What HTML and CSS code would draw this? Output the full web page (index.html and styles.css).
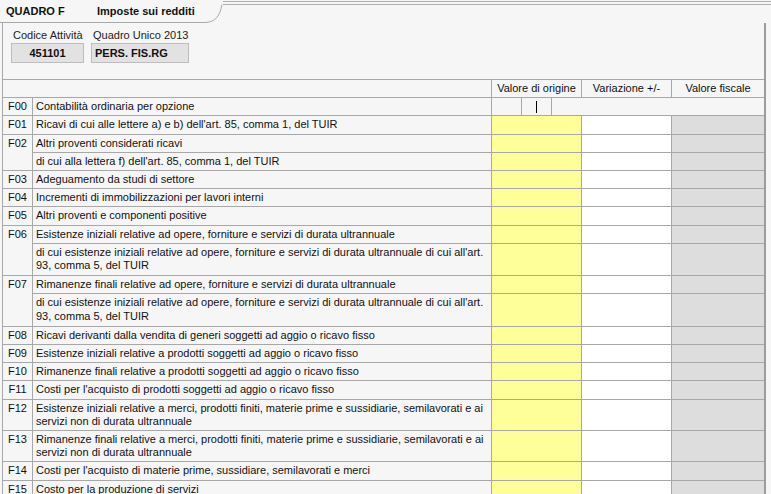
FILE: index.html
```html
<!DOCTYPE html>
<html lang="it">
<head>
    <meta charset="UTF-8">
    <title>Quadro F - Imposte sui redditi</title>
    <link rel="stylesheet" href="styles.css">
</head>
<body>
    <div class="tabbar">
        <div class="tab">
            <span class="tab-code">QUADRO F</span>
            <span>Imposte sui redditi</span>
        </div>
        <svg class="tab-curve" width="18" height="23" viewBox="0 0 18 23">
            <path d="M0 22.5 C10 22.5 15 16 17 4.5" fill="none" stroke="#a8a8a8" stroke-width="1"/>
        </svg>
        <div class="tab-rest"></div>
    </div>

    <div class="panel">
        <div class="info">
            <div class="field field-code">
                <div class="field-label">Codice Attività</div>
                <div class="field-box center">451101</div>
            </div>
            <div class="field field-model">
                <div class="field-label">Quadro Unico 2013</div>
                <div class="field-box">PERS. FIS.RG</div>
            </div>
        </div>

        <div class="grid">
            <div class="hblank"></div>
            <div class="h v1">Valore di origine</div>
            <div class="h v2">Variazione +/-</div>
            <div class="h v3">Valore fiscale</div>

            <div class="c">F00</div>
            <div class="d">Contabilità ordinaria per opzione</div>
            <div class="opt"><div class="opt-box"><span class="caret"></span></div></div>

            <div class="c">F01</div>
            <div class="d">Ricavi di cui alle lettere a) e b) dell'art. 85, comma 1, del TUIR</div>
            <div class="v1"></div><div class="v2"></div><div class="v3"></div>

            <div class="c span2">F02</div>
            <div class="d">Altri proventi considerati ricavi</div>
            <div class="v1"></div><div class="v2"></div><div class="v3"></div>
            <div class="d">di cui alla lettera f) dell'art. 85, comma 1, del TUIR</div>
            <div class="v1"></div><div class="v2"></div><div class="v3"></div>

            <div class="c">F03</div>
            <div class="d">Adeguamento da studi di settore</div>
            <div class="v1"></div><div class="v2"></div><div class="v3"></div>

            <div class="c">F04</div>
            <div class="d">Incrementi di immobilizzazioni per lavori interni</div>
            <div class="v1"></div><div class="v2"></div><div class="v3"></div>

            <div class="c">F05</div>
            <div class="d">Altri proventi e componenti positive</div>
            <div class="v1"></div><div class="v2"></div><div class="v3"></div>

            <div class="c span2">F06</div>
            <div class="d">Esistenze iniziali relative ad opere, forniture e servizi di durata ultrannuale</div>
            <div class="v1"></div><div class="v2"></div><div class="v3"></div>
            <div class="d multi">di cui esistenze iniziali relative ad opere, forniture e servizi di durata ultrannuale di cui all'art.<br>93, comma 5, del TUIR</div>
            <div class="v1"></div><div class="v2"></div><div class="v3"></div>

            <div class="c span2">F07</div>
            <div class="d">Rimanenze finali relative ad opere, forniture e servizi di durata ultrannuale</div>
            <div class="v1"></div><div class="v2"></div><div class="v3"></div>
            <div class="d multi">di cui esistenze iniziali relative ad opere, forniture e servizi di durata ultrannuale di cui all'art.<br>93, comma 5, del TUIR</div>
            <div class="v1"></div><div class="v2"></div><div class="v3"></div>

            <div class="c">F08</div>
            <div class="d">Ricavi derivanti dalla vendita di generi soggetti ad aggio o ricavo fisso</div>
            <div class="v1"></div><div class="v2"></div><div class="v3"></div>

            <div class="c">F09</div>
            <div class="d">Esistenze iniziali relative a prodotti soggetti ad aggio o ricavo fisso</div>
            <div class="v1"></div><div class="v2"></div><div class="v3"></div>

            <div class="c">F10</div>
            <div class="d">Rimanenze finali relative a prodotti soggetti ad aggio o ricavo fisso</div>
            <div class="v1"></div><div class="v2"></div><div class="v3"></div>

            <div class="c">F11</div>
            <div class="d">Costi per l'acquisto di prodotti soggetti ad aggio o ricavo fisso</div>
            <div class="v1"></div><div class="v2"></div><div class="v3"></div>

            <div class="c">F12</div>
            <div class="d">Esistenze iniziali relative a merci, prodotti finiti, materie prime e sussidiarie, semilavorati e ai<br>servizi non di durata ultrannuale</div>
            <div class="v1"></div><div class="v2"></div><div class="v3"></div>

            <div class="c">F13</div>
            <div class="d">Rimanenze finali relative a merci, prodotti finiti, materie prime e sussidiarie, semilavorati e ai<br>servizi non di durata ultrannuale</div>
            <div class="v1"></div><div class="v2"></div><div class="v3"></div>

            <div class="c">F14</div>
            <div class="d">Costi per l'acquisto di materie prime, sussidiare, semilavorati e merci</div>
            <div class="v1"></div><div class="v2"></div><div class="v3"></div>

            <div class="c">F15</div>
            <div class="d">Costo per la produzione di servizi</div>
            <div class="v1"></div><div class="v2"></div><div class="v3"></div>
        </div>
    </div>
</body>
</html>
```

FILE: styles.css
```css
body {
    font-family: "Liberation Sans", Arial, sans-serif;
    font-size: 11px;
    margin: 0;
    background: #f6f6f6;
    color: #111;
    overflow: hidden;
    white-space: nowrap;
}

.tabbar {
    display: flex;
    height: 23px;
}

.tab {
    width: 205px;
    height: 23px;
    box-sizing: border-box;
    border-bottom: 1px solid #a8a8a8;
    padding-left: 6px;
    display: flex;
    align-items: center;
    font-weight: bold;
}

.tab-code {
    width: 91px;
}

.tab-curve {
    display: block;
    flex: none;
}

.tab-rest {
    flex: 1;
    margin-top: 1px;
    height: 4px;
    border-top: 4px double #b0b0b0;
}

.panel {
    margin-left: 2px;
    width: 764px;
    box-sizing: border-box;
    border-left: 1px solid #a8a8a8;
    border-right: 2px solid #9c9c9c;
}

.info {
    display: flex;
    gap: 7px;
    padding: 6px 0 16px 8px;
}

.field-label {
    line-height: 13px;
    padding-left: 2px;
    margin-bottom: 1px;
    color: #222;
}

.field-box {
    height: 20px;
    box-sizing: border-box;
    line-height: 18px;
    background: #e2e2e2;
    border: 1px solid #bdbdbd;
    font-weight: bold;
    padding-left: 3px;
}

.field-box.center {
    text-align: center;
    padding-left: 0;
}

.field-code { width: 73px; }
.field-model { width: 98px; }

.grid {
    display: grid;
    grid-template-columns: 30px 459px 90px 90px 1fr;
    border-top: 1px solid #a8a8a8;
}

.grid > div {
    border-bottom: 1px solid #a8a8a8;
    border-right: 1px solid #a8a8a8;
    line-height: 13.2px;
}

.grid > .v3 {
    border-right: none;
}

.hblank { grid-column: 1 / span 2; }

.h {
    text-align: center;
    padding: 2px 0;
    background: #f6f6f6 !important;
}

.c {
    grid-column: 1;
    text-align: center;
    padding: 2px 0;
}

.span2 { grid-row: span 2; }

.d {
    grid-column: 2;
    padding: 2px 3px;
}

.d.multi {
    padding-bottom: 3px;
}

.v1 { grid-column: 3; background: #ffff99; }
.v2 { grid-column: 4; background: #ffffff; }
.v3 { grid-column: 5; background: #dddddd; }

.grid > .opt {
    grid-column: 3 / span 3;
    border-right: none;
    display: flex;
}

.opt-box {
    margin-left: 29px;
    width: 31px;
    box-sizing: border-box;
    border-left: 1px solid #a8a8a8;
    border-right: 1px solid #a8a8a8;
    display: flex;
    align-items: center;
    justify-content: center;
}

.caret {
    display: block;
    width: 1px;
    height: 12px;
    background: #000;
}
```
